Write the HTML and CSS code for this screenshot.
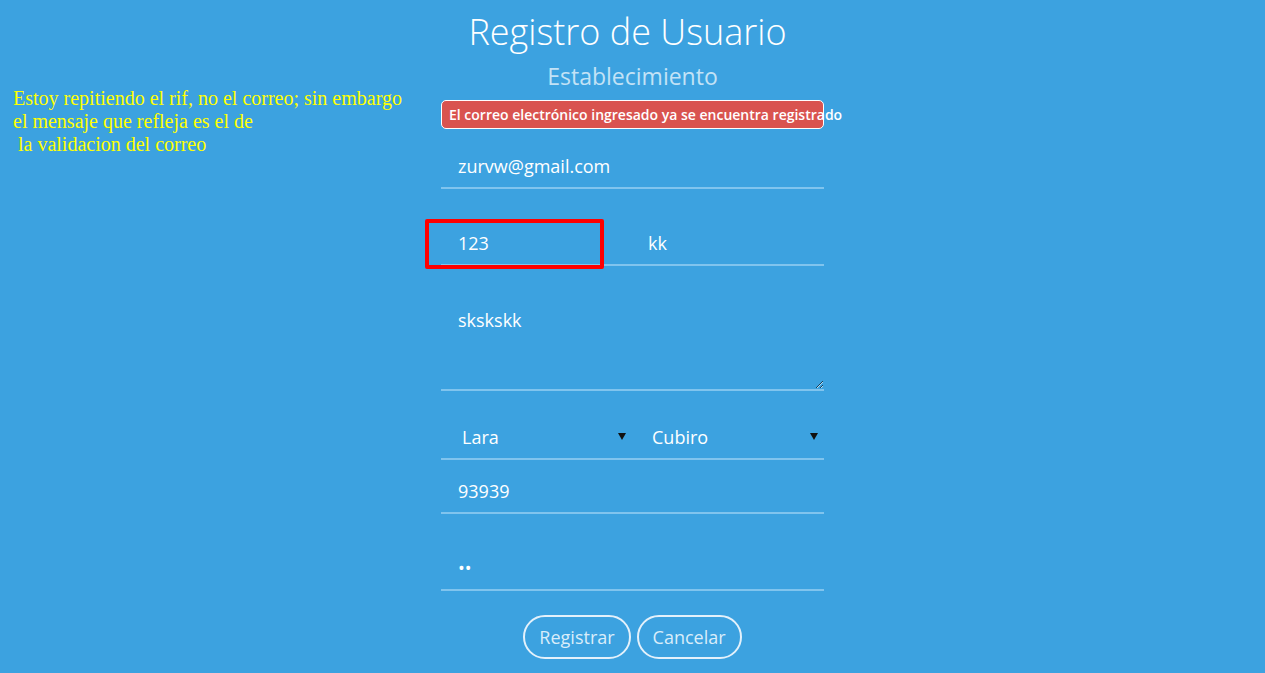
FILE: index.html
```html
<!DOCTYPE html>
<html lang="es">
<head>
<meta charset="utf-8">
<title>Registro de Usuario</title>
<link rel="stylesheet" href="styles.css">
</head>
<body>
<div class="note">Estoy repitiendo el rif, no el correo; sin embargo<br>el mensaje que refleja es el de<br>&nbsp;la validacion del correo</div>
<main class="page">
  <h1 class="title">Registro de Usuario</h1>
  <h2 class="subtitle">Establecimiento</h2>
  <form class="form">
    <div class="alert">El correo electrónico ingresado ya se encuentra registrado</div>
    <input class="field field-email" type="text" value="zurvw@gmail.com">
    <div class="row row-rif">
      <input class="field field-rif" type="text" value="123">
      <input class="field field-name" type="text" value="kk">
      <div class="mark"></div>
    </div>
    <textarea class="field area">skskskk</textarea>
    <div class="row row-select">
      <div class="select select-a"><span class="select-text">Lara</span><span class="caret"></span></div>
      <div class="select select-b"><span class="select-text">Cubiro</span><span class="caret"></span></div>
    </div>
    <input class="field field-zip" type="text" value="93939">
    <input class="field field-pass" type="password" value="aa">
    <div class="actions">
      <button type="button" class="btn">Registrar</button>
      <button type="button" class="btn">Cancelar</button>
    </div>
  </form>
</main>
</body>
</html>
```

FILE: styles.css
```css
html, body {
  margin: 0;
  padding: 0;
  height: 100%;
}
body {
  background: #3ca2e0;
  font-family: "Open Sans", sans-serif;
  color: #fff;
  overflow: hidden;
  position: relative;
}
.note {
  position: absolute;
  left: 13px;
  top: 87px;
  font-family: "Liberation Serif", serif;
  font-size: 20px;
  line-height: 23px;
  color: #ffff00;
}
.page {
  width: 383px;
  margin: 0 auto;
  display: flex;
  flex-direction: column;
  align-items: stretch;
}
.title {
  margin: 8px -100px 0;
  text-align: center;
  font-size: 36px;
  font-weight: 300;
  line-height: 47px;
  color: #fff;
  padding-right: 10px;
}
.subtitle {
  margin: 6px 0 0;
  text-align: center;
  font-size: 23px;
  font-weight: 400;
  line-height: 30px;
  color: #c3e2f6;
}
.form {
  display: flex;
  flex-direction: column;
  margin-top: 9px;
}
.alert {
  box-sizing: border-box;
  height: 29px;
  background: #d9534f;
  border: 1px solid #fff;
  border-radius: 5px;
  padding: 0 0 0 7px;
  font-size: 14px;
  font-weight: 600;
  line-height: 27px;
  white-space: nowrap;
  overflow: visible;
  color: #fff;
}
.field {
  box-sizing: border-box;
  display: block;
  width: 100%;
  height: 44px;
  margin: 0;
  padding: 0 17px;
  border: 0;
  border-bottom: 2px solid #80c4ee;
  background: transparent;
  font-family: "Open Sans", sans-serif;
  font-size: 18px;
  color: #fff;
  outline: none;
}
.field-email { margin-top: 16px; }
.row {
  display: flex;
  position: relative;
}
.row-rif { margin-top: 33px; }
.field-rif { width: 163px; flex: none; }
.field-name { flex: 1 1 0; width: 0; min-width: 0; padding-left: 44px; }
.mark {
  position: absolute;
  left: -16px;
  top: -3px;
  width: 179px;
  height: 50px;
  box-sizing: border-box;
  border: 4px solid #ff0000;
  border-radius: 2px;
}
.area {
  margin-top: 32px;
  height: 93px;
  padding-top: 9px;
  resize: vertical;
  line-height: 26px;
}
.row-select {
  margin-top: 25px;
  border-bottom: 2px solid #80c4ee;
}
.select {
  box-sizing: border-box;
  height: 42px;
  display: flex;
  align-items: center;
  justify-content: space-between;
  font-size: 18px;
}
.select-a { width: 191px; padding: 0 6px 0 21px; }
.select-b { flex: 1; padding: 0 6px 0 20px; }
.caret {
  width: 0;
  height: 0;
  border-left: 4px solid transparent;
  border-right: 4px solid transparent;
  border-top: 7px solid #111;
  margin-top: -2px;
}
.field-zip { margin-top: 10px; }
.field-pass { margin-top: 33px; font-size: 18px; letter-spacing: 0; }
.actions {
  display: flex;
  justify-content: center;
  gap: 6px;
  margin-top: 24px;
}
.btn {
  box-sizing: border-box;
  height: 44px;
  padding: 0 14px;
  border: 2px solid #e3f1fb;
  border-radius: 22px;
  background: transparent;
  font-family: "Open Sans", sans-serif;
  font-size: 18px;
  color: #d9edfa;
}
```
